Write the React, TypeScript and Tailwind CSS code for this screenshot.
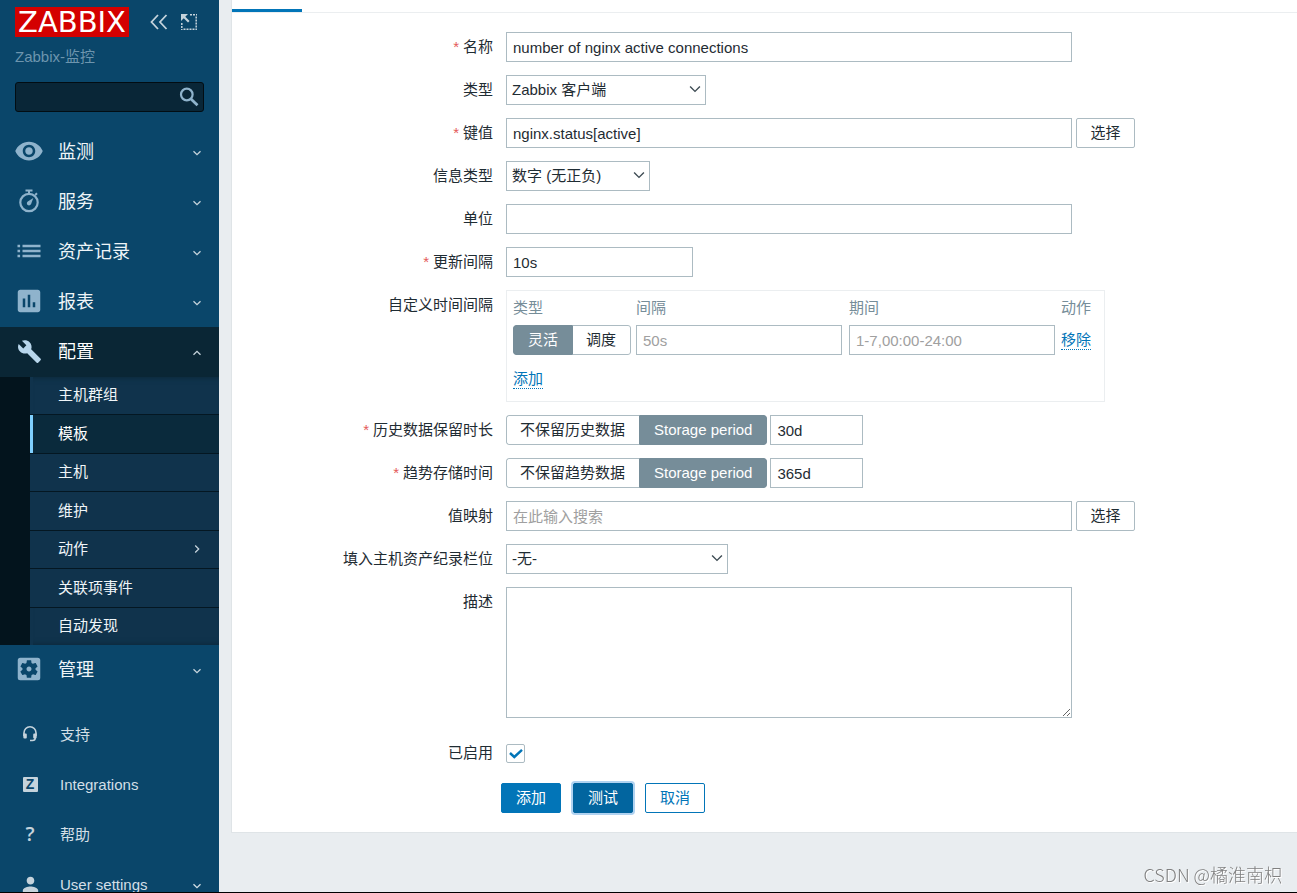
import type { ReactNode, SelectHTMLAttributes } from "react";
import { useState } from "react";
import { clsx } from "clsx";
import {
  MdAssessment,
  MdBuild,
  MdPerson,
  MdRemoveRedEye,
  MdSettingsApplications,
} from "react-icons/md";

const INPUT = "h-[30px] border border-[#acbbc2] bg-white px-[6px] text-[#1f2c33] outline-none placeholder:text-[#a0a0a0]";
const LINK = "border-b border-dotted border-[#0275b8] leading-[18px] text-[#0275b8]";

/* ---------- icons ---------- */

function Chevron({ className, size = 10, weight = 1.3 }: { className?: string; size?: number; weight?: number }) {
  return (
    <svg width={size} height={size} viewBox="0 0 10 10" fill="none" stroke="currentColor" strokeWidth={weight} className={className}>
      <path d="M1.5 3.2 5 6.7l3.5-3.5" />
    </svg>
  );
}

function StopwatchIcon() {
  return (
    <svg width="22" height="24" viewBox="0 0 22 24" fill="none" stroke="currentColor">
      <circle cx="11" cy="13.5" r="8.7" strokeWidth="2.2" />
      <path d="M7.500 1.500h7M11 1.500v3M17.200 6l1.800-1.800" strokeWidth="2" />
      <path d="m15.300 9-2.200 6a2.200 2.200 0 1 1-3.300-2.600z" fill="currentColor" stroke="none" />
    </svg>
  );
}

function ListIcon() {
  return (
    <svg width="24" height="14" viewBox="0 0 24 14" fill="currentColor">
      <path d="M.5.7h2.600v2.600H.5zM.5 5.700h2.600v2.600H.5zM.5 10.700h2.600v2.600H.5zM5.500.7h18v2.600h-18zM5.500 5.700h18v2.600h-18zM5.500 10.700h18v2.600h-18z" />
    </svg>
  );
}

function SearchIcon() {
  return (
    <svg width="20" height="20" viewBox="0 0 20 20" fill="none" stroke="currentColor">
      <circle cx="7.800" cy="7.500" r="5.800" strokeWidth="2.200" />
      <path d="m12 12 6.500 6.200" strokeWidth="2.800" />
    </svg>
  );
}

function CollapseIcon() {
  return (
    <svg width="18" height="16" viewBox="0 0 18 16" fill="none" stroke="currentColor" strokeWidth="1.800">
      <path d="M8 1 1.500 8 8 15M16.500 1 10 8l6.500 7" />
    </svg>
  );
}

function KioskIcon() {
  return (
    <svg width="16" height="16" viewBox="0 0 16 16" fill="none" stroke="currentColor">
      <path d="M9 .8h7M15.200 2.500V16M.8 9v7M2.500 15.200H14" strokeWidth="1.500" strokeDasharray="2 1" />
      <path d="m2 2 5.800 5.800" strokeWidth="2.200" />
      <path d="M0 0h7L0 7z" fill="currentColor" stroke="none" />
    </svg>
  );
}

function HeadsetIcon() {
  return (
    <svg width="14" height="16" viewBox="0 0 14 16" fill="none" stroke="currentColor" strokeWidth="1.600">
      <path d="M1 10V6.800a6 6 0 0 1 12 0V10" />
      <path d="M.3 7.500h2.500a1 1 0 0 1 1 1v3a1 1 0 0 1-1 1H1.500A1.200 1.200 0 0 1 .3 11.300zM13.700 7.500h-2.500a1 1 0 0 0-1 1v3a1 1 0 0 0 1 1h1.300a1.200 1.200 0 0 0 1.200-1.200z" fill="currentColor" stroke="none" />
      <path d="M12.200 12c0 1.800-1.200 2.500-2.700 2.500H7" />
    </svg>
  );
}

/* ---------- sidebar ---------- */

const MAIN_NAV = [
  { label: "监测", icon: <MdRemoveRedEye size={30} /> },
  { label: "服务", icon: <StopwatchIcon /> },
  { label: "资产记录", icon: <ListIcon /> },
  { label: "报表", icon: <MdAssessment size={30} /> },
];

const CONFIG_NAV = ["主机群组", "模板", "主机", "维护", "动作", "关联项事件", "自动发现"];

const FOOTER_NAV = [
  { label: "支持", icon: <HeadsetIcon /> },
  {
    label: "Integrations",
    icon: (
      <span className="flex size-[15px] items-center justify-center rounded-[1px] bg-[#c5d3dc] text-[14px] leading-none font-bold text-[#0a466a]">
        Z
      </span>
    ),
  },
  { label: "帮助", icon: <span className="font-['Open_Sans'] text-xl leading-none font-semibold">?</span> },
  { label: "User settings", icon: <MdPerson size={23} />, expandable: true },
];

function NavItem({ label, icon, active = false }: { label: string; icon: ReactNode; active?: boolean }) {
  return (
    <a
      href="#"
      className={clsx("flex h-[50px] items-center pr-[17px] pl-[14px] text-lg", active ? "bg-[#0a2635] text-white" : "text-[#eff5f8]")}
    >
      <span className={clsx("mb-[2px] flex w-[30px] justify-center", active ? "text-[#b8d6ec]" : "text-[#8fb3cc]")}>{icon}</span>
      <span className="ml-[14px] flex-1">{label}</span>
      <Chevron className={clsx("mt-[2px] text-[#c5d3dc]", active && "rotate-180")} />
    </a>
  );
}

function Sidebar() {
  return (
    <aside className="flex w-[219px] shrink-0 flex-col overflow-hidden bg-[#0a466a]">
      <div className="px-[15px] pt-[7px]">
        <div className="flex items-center text-[#c5d3dc]">
          <a href="#" className="flex h-[30px] w-[114px] items-center justify-center bg-[#d40000] font-['DejaVu_Sans'] text-[29px] leading-none text-white">
            ZABBIX
          </a>
          <button type="button" aria-label="Collapse sidebar" className="ml-[21px]"><CollapseIcon /></button>
          <button type="button" aria-label="Hide sidebar" className="ml-[13px]"><KioskIcon /></button>
        </div>
        <p className="mt-[9px] leading-[22px] text-[#6d95ae]">Zabbix-监控</p>
        <form className="mt-[14px] flex h-[30px] items-center rounded-[3px] border border-[#020d13] bg-[#092637] pr-[4px]">
          <input aria-label="Search" className="h-full min-w-0 flex-1 bg-transparent px-2 text-white outline-none" />
          <button type="button" aria-label="Search" className="text-[#8fb3cc]"><SearchIcon /></button>
        </form>
      </div>

      <nav className="mt-[15px]">
        {MAIN_NAV.map((item) => (
          <NavItem key={item.label} {...item} />
        ))}
        <NavItem label="配置" icon={<MdBuild size={25} />} active />
        <ul className="flex h-67 flex-col bg-[#03141d] pl-[30px]">
          {CONFIG_NAV.map((label, i) => {
            const selected = label === "模板";
            return (
              <li key={label} className={clsx("flex-1", i < CONFIG_NAV.length - 1 && "border-b border-[#041722]")}>
                <a
                  href="#"
                  className={clsx(
                    "flex h-full items-center border-l-3 pr-[17px] pl-[25px]",
                    selected ? "border-[#7fd0ff] bg-[#0a2a3c] text-white" : "border-[#10334c] bg-[#10334c] text-[#eff5f8]",
                    i === 0 && "shadow-[inset_0_6px_6px_-6px_#0a2635]",
                    i === 6 && "shadow-[inset_0_-6px_6px_-6px_#0a2635]"
                  )}
                >
                  <span className="flex-1">{label}</span>
                  {label === "动作" && <Chevron className="-rotate-90 text-[#c5d3dc]" />}
                </a>
              </li>
            );
          })}
        </ul>
        <NavItem label="管理" icon={<MdSettingsApplications size={30} />} />
      </nav>

      <nav className="mt-[15px] text-[#d3dfe6]">
        {FOOTER_NAV.map((item) => (
          <a key={item.label} href="#" className="flex h-[50px] items-center pr-[17px] pl-[15px]">
            <span className="mb-[2px] flex w-[30px] justify-center text-[#c5d3dc]">{item.icon}</span>
            <span className="ml-[15px] flex-1">{item.label}</span>
            {item.expandable && <Chevron className="mt-[2px]" />}
          </a>
        ))}
      </nav>
    </aside>
  );
}

/* ---------- form parts ---------- */

function Row({ label, htmlFor, required, children }: { label: string; htmlFor?: string; required?: boolean; children: ReactNode }) {
  return (
    <div className="flex gap-[13px]">
      <label htmlFor={htmlFor} className="w-[261px] shrink-0 text-right leading-[30px]">
        {required && <span className="mr-1 text-[#e45959]">*</span>}
        {label}
      </label>
      <div className="flex min-h-[30px] min-w-0 flex-1 items-center">{children}</div>
    </div>
  );
}

function Select({ className, children, ...props }: SelectHTMLAttributes<HTMLSelectElement>) {
  return (
    <span className={clsx("relative", className)}>
      <select {...props} className="h-[30px] w-full appearance-none border border-[#acbbc2] bg-white px-[5px] text-[#1f2c33] outline-none">
        {children}
      </select>
      <Chevron size={14} weight={1} className="pointer-events-none absolute top-[7px] right-1 text-[#3c4a52]" />
    </span>
  );
}

/** Segmented radio group; the selected segment is filled grey. */
function Segmented({ name, options, initial }: { name: string; options: string[]; initial: string }) {
  const [value, setValue] = useState(initial);
  return (
    <div role="radiogroup" className="flex h-[30px] w-fit overflow-hidden rounded-[3px]">
      {options.map((option, i) => (
        <label
          key={option}
          className={clsx(
            "flex cursor-pointer items-center border whitespace-nowrap",
            i === 0 ? "rounded-l-[3px]" : "rounded-r-[3px]",
            option === value
              ? "border-[#768d99] bg-[#768d99] px-[14px] text-white"
              : clsx("border-[#acbbc2] bg-white", i === 0 ? "border-r-0 pr-[14px] pl-[13px]" : "border-l-0 pr-[14px] pl-[13px]")
          )}
        >
          <input type="radio" name={name} checked={option === value} onChange={() => setValue(option)} className="sr-only" />
          {option}
        </label>
      ))}
    </div>
  );
}

function PickButton() {
  return (
    <button type="button" className="ml-1 h-[30px] w-[59px] rounded-[2px] border border-[#acbbc2] bg-white whitespace-nowrap">
      选择
    </button>
  );
}

function CustomIntervals() {
  return (
    <div className="border border-[#ebeef0] px-[6px] pb-3">
      <table className="border-collapse">
        <thead>
          <tr className="h-[34px] text-left text-[#768d99]">
            <th className="font-normal">类型</th>
            <th className="font-normal">间隔</th>
            <th className="font-normal">期间</th>
            <th className="font-normal">动作</th>
          </tr>
        </thead>
        <tbody>
          <tr>
            <td className="pr-[5px]">
              <Segmented name="interval-type" options={["灵活", "调度"]} initial="灵活" />
            </td>
            <td className="pr-[7px]">
              <input aria-label="间隔" placeholder="50s" className={clsx(INPUT, "block w-[206px]")} />
            </td>
            <td className="pr-[6px]">
              <input aria-label="期间" placeholder="1-7,00:00-24:00" className={clsx(INPUT, "block w-[206px]")} />
            </td>
            <td className="pr-[7px]">
              <button type="button" className={LINK}>移除</button>
            </td>
          </tr>
        </tbody>
      </table>
      <button type="button" className={clsx(LINK, "mt-[15px] block")}>添加</button>
    </div>
  );
}

function ItemForm() {
  return (
    <form className="pt-[19px] pb-[19px]">
      <div className="flex flex-col gap-[13px]">
        <Row label="名称" htmlFor="name" required>
          <input id="name" defaultValue="number of nginx active connections" className={clsx(INPUT, "w-[566px]")} />
        </Row>
        <Row label="类型" htmlFor="type">
          <Select id="type" className="w-[200px]"><option>Zabbix 客户端</option></Select>
        </Row>
        <Row label="键值" htmlFor="key" required>
          <input id="key" defaultValue="nginx.status[active]" className={clsx(INPUT, "w-[566px]")} />
          <PickButton />
        </Row>
        <Row label="信息类型" htmlFor="value-type">
          <Select id="value-type" className="w-[144px]"><option>数字 (无正负)</option></Select>
        </Row>
        <Row label="单位" htmlFor="units">
          <input id="units" className={clsx(INPUT, "w-[566px]")} />
        </Row>
        <Row label="更新间隔" htmlFor="delay" required>
          <input id="delay" defaultValue="10s" className={clsx(INPUT, "w-[187px]")} />
        </Row>
        <Row label="自定义时间间隔">
          <CustomIntervals />
        </Row>
        <Row label="历史数据保留时长" htmlFor="history" required>
          <Segmented name="history-mode" options={["不保留历史数据", "Storage period"]} initial="Storage period" />
          <input id="history" defaultValue="30d" className={clsx(INPUT, "ml-[3px] w-[93px]")} />
        </Row>
        <Row label="趋势存储时间" htmlFor="trends" required>
          <Segmented name="trends-mode" options={["不保留趋势数据", "Storage period"]} initial="Storage period" />
          <input id="trends" defaultValue="365d" className={clsx(INPUT, "ml-[3px] w-[93px]")} />
        </Row>
        <Row label="值映射" htmlFor="valuemap">
          <input id="valuemap" placeholder="在此输入搜索" className={clsx(INPUT, "w-[566px]")} />
          <PickButton />
        </Row>
        <Row label="填入主机资产纪录栏位" htmlFor="inventory">
          <Select id="inventory" className="w-[222px]"><option>-无-</option></Select>
        </Row>
        <Row label="描述" htmlFor="description">
          <textarea id="description" className="mb-[7px] block h-[131px] w-[566px] resize border border-[#acbbc2] bg-white p-[6px] outline-none" />
        </Row>
        <Row label="已启用" htmlFor="enabled">
          <span className="relative flex">
            <input id="enabled" type="checkbox" defaultChecked className="peer size-[19px] appearance-none rounded-[2px] border border-[#acbbc2] bg-white" />
            <svg viewBox="0 0 19 19" fill="none" stroke="#0275b8" strokeWidth="2.400" className="pointer-events-none absolute inset-0 hidden peer-checked:block">
              <path d="m4 9 4.300 4L16 5.800" />
            </svg>
          </span>
        </Row>
      </div>

      <div className="mt-[15px] flex gap-3 pl-[269px]">
        <button type="button" className="h-[30px] rounded-[2px] border border-[#0275b8] bg-[#0275b8] px-[14px] text-white">添加</button>
        <button type="button" className="h-[30px] rounded-[2px] border border-[#02659f] bg-[#02659f] px-[14px] text-white shadow-[0_0_0_2px_#b0d2f0]">测试</button>
        <button type="button" className="h-[30px] rounded-[2px] border border-[#0275b8] bg-white px-[14px] text-[#0275b8]">取消</button>
      </div>
    </form>
  );
}

export default function App() {
  return (
    <div className="flex h-screen overflow-hidden border-b border-black bg-[#e9edf0] font-['Liberation_Sans','Noto_Sans_CJK_SC',sans-serif] text-[15px] text-[#1f2c33]">
      <Sidebar />
      <main className="min-w-0 flex-1 pl-3">
        <section className="border-b border-l border-[#dfe4e7] bg-white">
          <div className="border-b border-[#ebeef0]">
            <div className="h-3 w-[70px] border-b-3 border-[#0275b8]" />
          </div>
          <ItemForm />
        </section>
      </main>
      <p className="fixed right-[15px] bottom-[5px] font-['Noto_Sans_CJK_SC',sans-serif] text-lg font-light text-[#808080] [text-shadow:1px_1px_0_#ffffff]">
        CSDN @橘淮南枳
      </p>
    </div>
  );
}
